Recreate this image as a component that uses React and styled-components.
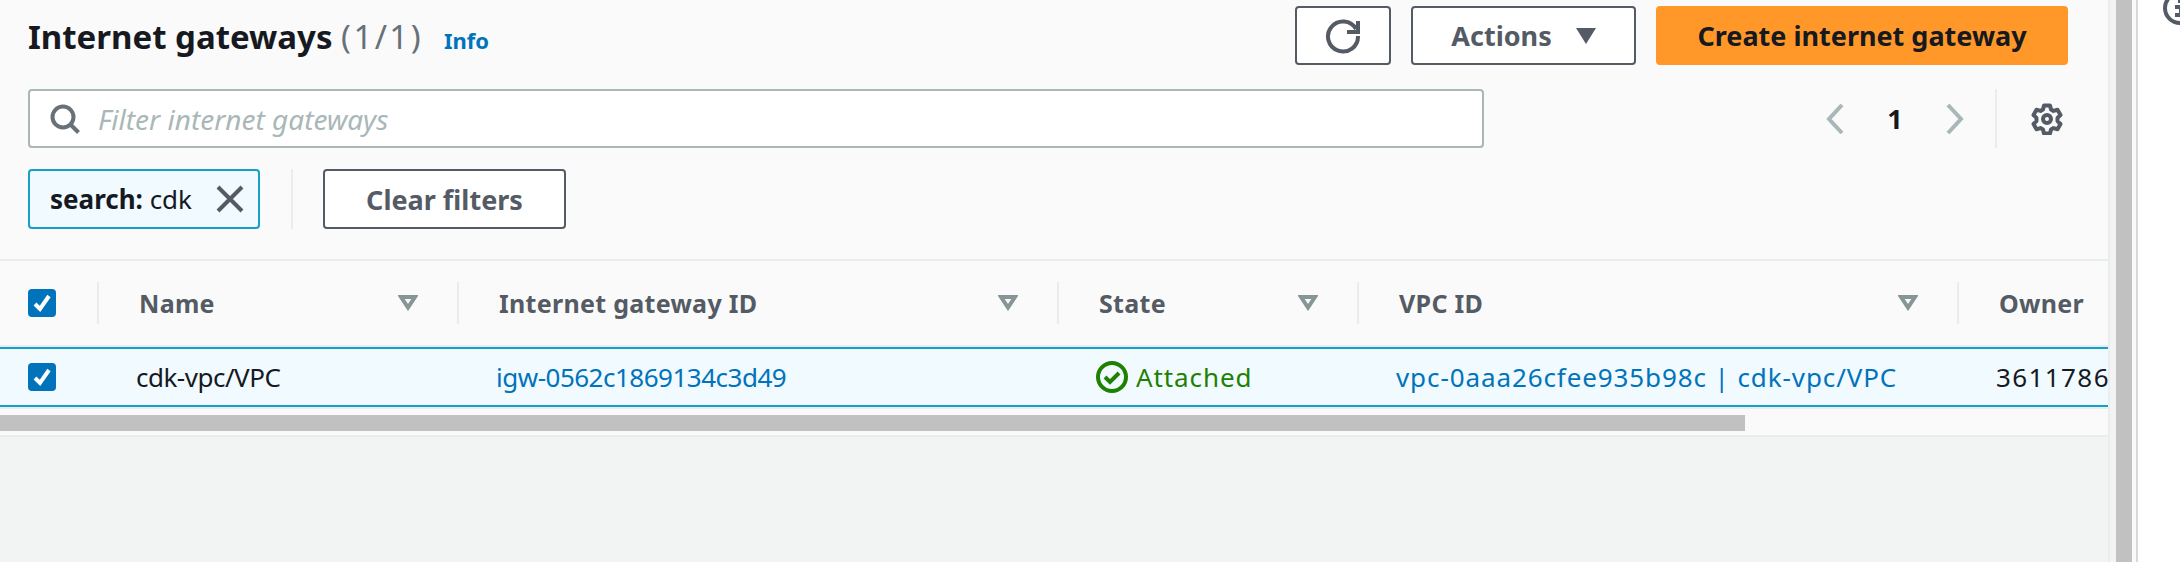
import React from 'react';
import styled, { createGlobalStyle } from 'styled-components';

const GlobalStyle = createGlobalStyle`
  html, body {
    margin: 0;
    padding: 0;
    background: #ffffff;
    font-family: "Noto Sans", "Open Sans", sans-serif;
  }
  * { box-sizing: border-box; }
`;

const COLUMNS = '97px 360px 600px 300px 600px 151px';

const Page = styled.div`
  display: flex;
  width: 2180px;
  height: 562px;
  overflow: hidden;
  background: #ffffff;
`;

const Main = styled.div`
  width: 2110px;
  flex: none;
  background: #f2f3f3;
  border-right: 2px solid #eaeded;
`;

const Panel = styled.section`
  background: #fafafa;
  border-bottom: 2px solid #eaeded;
`;

const PanelHeader = styled.header`
  height: 261px;
  padding: 6px 40px 0 28px;
  border-bottom: 2px solid #eaeded;
`;

const TitleRow = styled.div`
  display: flex;
  justify-content: space-between;
  height: 59px;
`;

const Heading = styled.div`
  display: flex;
  align-items: baseline;
  padding-top: 9px;
`;

const Title = styled.h1`
  margin: 0;
  font-size: 33px;
  line-height: 44px;
  font-weight: 700;
  color: #16191f;
`;

const Counter = styled.span`
  font-weight: 400;
  letter-spacing: 2.4px;
  color: #687078;
`;

const InfoLink = styled.a`
  margin-left: 21px;
  font-size: 22px;
  font-weight: 700;
  color: #0073bb;
`;

const Actions = styled.div`
  display: flex;
  gap: 20px;
`;

const Button = styled.button`
  display: flex;
  align-items: center;
  justify-content: center;
  gap: 24px;
  width: ${p => p.$width}px;
  height: ${p => p.$height || 59}px;
  padding: 0;
  border: 2px solid ${p => (p.$primary ? '#ff9828' : '#545b64')};
  border-radius: 4px;
  background: ${p => (p.$primary ? '#ff9828' : '#ffffff')};
  color: ${p => (p.$primary ? '#16191f' : '#545b64')};
  font-family: inherit;
  font-size: 27px;
  font-weight: 700;
`;

const FilterRow = styled.div`
  display: flex;
  align-items: stretch;
  height: 59px;
  margin-top: 24px;
`;

const SearchBox = styled.div`
  display: flex;
  align-items: center;
  gap: 18px;
  width: 1456px;
  padding-left: 20px;
  border: 2px solid #aab7b8;
  border-radius: 4px;
  background: #ffffff;
`;

const Placeholder = styled.span`
  font-size: 28px;
  font-style: italic;
  color: #aab7b8;
`;

const Pager = styled.div`
  display: flex;
  align-items: center;
  margin-left: 342px;
`;

const PageNumber = styled.span`
  width: 102px;
  text-align: center;
  font-size: 27px;
  font-weight: 700;
  color: #16191f;
`;

const PagerRule = styled.div`
  width: 2px;
  margin: 0 34px 0 31px;
  background: #eaeded;
`;

const GearWrap = styled.div`
  display: flex;
  align-items: center;
`;

const TokenRow = styled.div`
  display: flex;
  align-items: stretch;
  height: 60px;
  margin-top: 21px;
`;

const Token = styled.div`
  display: flex;
  align-items: center;
  justify-content: space-between;
  width: 232px;
  padding: 0 14px 0 20px;
  border: 2px solid #16a0c9;
  border-radius: 4px;
  background: #f1faff;
  font-size: 26px;
  color: #16191f;
`;

const TokenKey = styled.strong`
  font-weight: 700;
`;

const TokenRule = styled.div`
  width: 2px;
  margin: 0 30px 0 31px;
  background: #eaeded;
`;

const Viewport = styled.div`
  overflow: hidden;
  width: 2108px;
`;

const HeadRow = styled.div`
  display: grid;
  grid-template-columns: ${COLUMNS};
  height: 86px;
  border-bottom: 2px solid #eaeded;
`;

const HeadCell = styled.div`
  display: flex;
  align-items: center;
  justify-content: space-between;
  padding-right: 39px;
  font-size: 25px;
  font-weight: 700;
  letter-spacing: 0.3px;
  color: #545b64;
  white-space: nowrap;
`;

const HeadLabel = styled.div`
  display: flex;
  align-items: center;
  height: 42px;
  padding-left: 40px;
  border-left: 2px solid #eaeded;
`;

const CheckCell = styled.div`
  display: flex;
  align-items: center;
  padding-left: 28px;
`;

const CheckBox = styled.div`
  display: flex;
  align-items: center;
  justify-content: center;
  width: 28px;
  height: 28px;
  border-radius: 4px;
  background: #0073bb;
`;

const BodyRow = styled.div`
  display: grid;
  grid-template-columns: ${COLUMNS};
  height: 60px;
  border-top: 2px solid #16a0c9;
  border-bottom: 2px solid #16a0c9;
  background: #f1faff;
`;

const BodyCell = styled.div`
  display: flex;
  align-items: center;
  gap: 8px;
  padding-left: 39px;
  font-size: 26px;
  letter-spacing: ${p => p.$spacing || 0}px;
  white-space: nowrap;
  overflow: hidden;
  color: ${p => p.$color || '#16191f'};
`;

const RowEdge = styled.div`
  height: 2px;
  background: #eaeded;
`;

const ScrollTrack = styled.div`
  height: 26px;
  padding-top: 6px;
`;

const ScrollThumb = styled.div`
  width: 1745px;
  height: 16px;
  background: #c1c1c1;
`;

const SideGutter = styled.div`
  display: flex;
  flex: none;
  width: 28px;
  padding-left: 6px;
  background: #f2f3f3;
`;

const PageScrollbar = styled.div`
  width: 16px;
  background: #c1c1c1;
`;

const SideRail = styled.div`
  flex: 1;
  padding-left: 4px;
  background: #fafafa;
  &::after {
    content: '';
    display: block;
    width: 2px;
    height: 100%;
    background: #d5dbdb;
  }
`;

const HelpPanel = styled.aside`
  flex: 1;
  overflow: hidden;
  padding-left: 24px;
`;

const HelpIcon = styled.svg`
  display: block;
  margin-top: -10px;
`;

const Refresh = () => (
  <svg width="36" height="36" viewBox="0 0 36 36" fill="none" stroke="#545b64" strokeWidth="4">
    <path d="M31 11A15 15 0 1 0 33 18" />
    <path d="M33 3v11H22" />
  </svg>
);

const Caret = () => (
  <svg width="20" height="16" viewBox="0 0 20 16">
    <path d="M0 0h20L10 16z" fill="#545b64" />
  </svg>
);

const Search = () => (
  <svg width="30" height="30" viewBox="0 0 30 30" fill="none" stroke="#687078" strokeWidth="4">
    <circle cx="13" cy="13" r="10.5" />
    <path d="M20.5 20.5L28.5 28.5" />
  </svg>
);

const Cross = () => (
  <svg width="28" height="28" viewBox="0 0 28 28" fill="none" stroke="#545b64" strokeWidth="4">
    <path d="M2 2l24 24M26 2L2 26" />
  </svg>
);

const Chevron = ({ flip }) => (
  <svg width="18" height="30" viewBox="0 0 18 30" fill="none" stroke="#aab7b8" strokeWidth="4">
    <path d={flip ? 'M2 1l13 14L2 29' : 'M16 1L3 15l13 14'} />
  </svg>
);

const Gear = () => (
  <svg width="32" height="32" viewBox="0 0 32 32" fill="none" stroke="#545b64" strokeWidth="4" strokeLinejoin="round">
    <circle cx="16" cy="16" r="4" />
    <path d="M13 2.500h6l1 4 2.500 1.400 4-1.100 3 5.200-3 2.900v3.200l3 2.900-3 5.200-4-1.100-2.500 1.400-1 4h-6l-1-4-2.500-1.400-4 1.100-3-5.200 3-2.900v-3.200l-3-2.900 3-5.200 4 1.100L12 6.500z" />
  </svg>
);

const SortMark = () => (
  <svg width="20" height="16" viewBox="0 0 20 16" fill="none">
    <path d="M3 2h14L10 12.500z" stroke="#879596" strokeWidth="4" />
  </svg>
);

const Tick = () => (
  <svg width="20" height="20" viewBox="0 0 20 20" fill="none" stroke="#ffffff" strokeWidth="4">
    <path d="M3 11l5 5 9-13" />
  </svg>
);

const Attached = () => (
  <svg width="32" height="32" viewBox="0 0 32 32" fill="none" stroke="#1d8102" strokeWidth="4">
    <circle cx="16" cy="16" r="14" />
    <path d="M9 16l5 5 9-9" />
  </svg>
);

const HEAD = ['Name', 'Internet gateway ID', 'State', 'VPC ID'];

function App() {
  return (
    <Page>
      <GlobalStyle />
      <Main>
        <Panel>
          <PanelHeader>
            <TitleRow>
              <Heading>
                <Title>Internet gateways <Counter>(1/1)</Counter></Title>
                <InfoLink>Info</InfoLink>
              </Heading>
              <Actions>
                <Button $width={96}><Refresh /></Button>
                <Button $width={225}>Actions <Caret /></Button>
                <Button $width={412} $primary>Create internet gateway</Button>
              </Actions>
            </TitleRow>
            <FilterRow>
              <SearchBox>
                <Search />
                <Placeholder>Filter internet gateways</Placeholder>
              </SearchBox>
              <Pager>
                <Chevron />
                <PageNumber>1</PageNumber>
                <Chevron flip />
              </Pager>
              <PagerRule />
              <GearWrap><Gear /></GearWrap>
            </FilterRow>
            <TokenRow>
              <Token>
                <span><TokenKey>search:</TokenKey> cdk</span>
                <Cross />
              </Token>
              <TokenRule />
              <Button $width={243} $height={60}>Clear filters</Button>
            </TokenRow>
          </PanelHeader>
          <Viewport>
            <HeadRow>
              <CheckCell><CheckBox><Tick /></CheckBox></CheckCell>
              {HEAD.map(label => (
                <HeadCell key={label}>
                  <HeadLabel>{label}</HeadLabel>
                  <SortMark />
                </HeadCell>
              ))}
              <HeadCell><HeadLabel>Owner</HeadLabel></HeadCell>
            </HeadRow>
            <BodyRow>
              <CheckCell><CheckBox><Tick /></CheckBox></CheckCell>
              <BodyCell $spacing={-0.5}>cdk-vpc/VPC</BodyCell>
              <BodyCell $color="#0073bb" $spacing={-0.5}>igw-0562c1869134c3d49</BodyCell>
              <BodyCell $color="#1d8102" $spacing={0.9}><Attached />Attached</BodyCell>
              <BodyCell $color="#0073bb" $spacing={0.9}>vpc-0aaa26cfee935b98c | cdk-vpc/VPC</BodyCell>
              <BodyCell $spacing={1.4}>3611786</BodyCell>
            </BodyRow>
            <RowEdge />
            <ScrollTrack><ScrollThumb /></ScrollTrack>
          </Viewport>
        </Panel>
      </Main>
      <SideGutter>
        <PageScrollbar />
        <SideRail />
      </SideGutter>
      <HelpPanel>
        <HelpIcon width="36" height="36" viewBox="0 0 36 36" fill="none" stroke="#545b64" strokeWidth="4">
          <circle cx="18" cy="18" r="15" />
          <path d="M18 10v3M13 17h6v8M13 25h10" />
        </HelpIcon>
      </HelpPanel>
    </Page>
  );
}

export default App;
